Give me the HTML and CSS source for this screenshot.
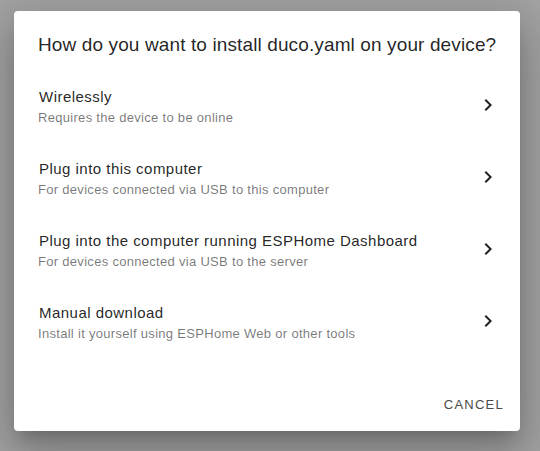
FILE: index.html
```html
<!DOCTYPE html>
<html>
<head>
<meta charset="utf-8">
<link rel="stylesheet" href="styles.css">
</head>
<body>
<div class="dialog">
  <h2 class="title">How do you want to install duco.yaml on your device?</h2>
  <div class="list">
    <div class="item">
      <div class="text">
        <div class="primary">Wirelessly</div>
        <div class="secondary">Requires the device to be online</div>
      </div>
      <svg class="chev" viewBox="0 0 24 24"><path d="M10 6L8.59 7.41 13.17 12l-4.58 4.59L10 18l6-6z"/></svg>
    </div>
    <div class="item">
      <div class="text">
        <div class="primary">Plug into this computer</div>
        <div class="secondary">For devices connected via USB to this computer</div>
      </div>
      <svg class="chev" viewBox="0 0 24 24"><path d="M10 6L8.59 7.41 13.17 12l-4.58 4.59L10 18l6-6z"/></svg>
    </div>
    <div class="item">
      <div class="text">
        <div class="primary">Plug into the computer running ESPHome Dashboard</div>
        <div class="secondary">For devices connected via USB to the server</div>
      </div>
      <svg class="chev" viewBox="0 0 24 24"><path d="M10 6L8.59 7.41 13.17 12l-4.58 4.59L10 18l6-6z"/></svg>
    </div>
    <div class="item">
      <div class="text">
        <div class="primary">Manual download</div>
        <div class="secondary">Install it yourself using ESPHome Web or other tools</div>
      </div>
      <svg class="chev" viewBox="0 0 24 24"><path d="M10 6L8.59 7.41 13.17 12l-4.58 4.59L10 18l6-6z"/></svg>
    </div>
  </div>
  <div class="actions">
    <button class="btn">Cancel</button>
  </div>
</div>
</body>
</html>
```

FILE: styles.css
```css
html, body {
  margin: 0;
  height: 100%;
}
body {
  background: #a2a2a2;
  font-family: "Liberation Sans", Arial, sans-serif;
  box-sizing: border-box;
  padding: 11px 20px 20px 14px;
  display: flex;
  align-items: flex-start;
}
.dialog {
  width: 506px;
  height: 420px;
  background: #fff;
  border-radius: 4px;
  box-shadow: 0 11px 15px -7px rgba(0,0,0,.2), 0 24px 38px 3px rgba(0,0,0,.14), 0 9px 46px 8px rgba(0,0,0,.12);
  display: flex;
  flex-direction: column;
}
.title {
  margin: 0;
  padding: 22px 24px 12px;
  font-size: 19px;
  line-height: 24px;
  font-weight: 400;
  letter-spacing: 0.12px;
  white-space: nowrap;
  color: rgba(0,0,0,.87);
}
.list {
  flex: 1;
}
.item {
  height: 72px;
  box-sizing: border-box;
  padding: 0 20px 0 24px;
  display: flex;
  align-items: center;
}
.text {
  flex: 1;
  align-self: flex-start;
  padding-top: 18px;
}
.primary {
  font-size: 15px;
  line-height: 20px;
  letter-spacing: 0.47px;
  padding-left: 1px;
  color: rgba(0,0,0,.87);
}
.secondary {
  font-size: 13px;
  line-height: 20px;
  letter-spacing: 0.3px;
  margin-top: 1px;
  color: rgba(0,0,0,.54);
}
.chev {
  width: 24px;
  height: 24px;
  fill: rgba(0,0,0,.87);
}
.actions {
  height: 53px;
  box-sizing: border-box;
  padding: 8px;
  display: flex;
  justify-content: flex-end;
  align-items: center;
}
.btn {
  height: 36px;
  padding: 0 8px;
  border: none;
  background: none;
  font-family: "Liberation Sans", Arial, sans-serif;
  font-size: 13px;
  font-weight: 400;
  letter-spacing: 1.25px;
  text-transform: uppercase;
  color: #4a4a4a;
}
```
